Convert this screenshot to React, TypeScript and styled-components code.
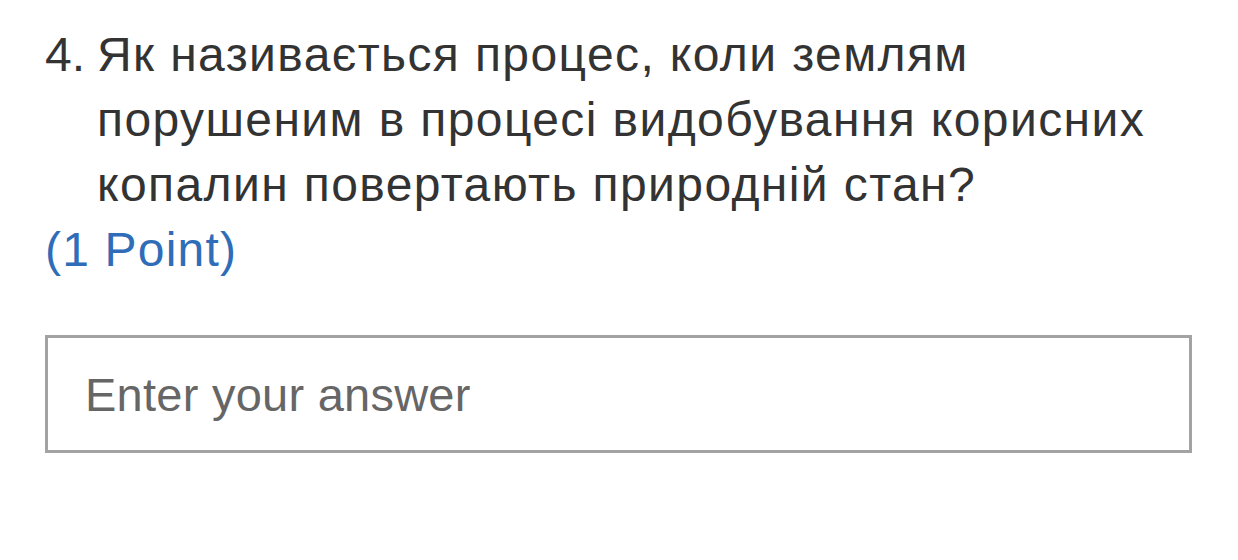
import styled, { createGlobalStyle } from 'styled-components';

const GlobalStyle = createGlobalStyle`
  body {
    margin: 0;
    background: #ffffff;
    font-family: 'Liberation Sans', Arial, sans-serif;
  }
`;

const Page = styled.main`
  padding: 22px 46px 0 45px;
  width: 1238px;
  box-sizing: border-box;
`;

const Question = styled.div`
  display: flex;
  color: #333333;
  font-size: 48px;
  line-height: 65px;
  letter-spacing: 1.4px;
`;

const Number = styled.span`
  flex: 0 0 52px;
  letter-spacing: 0;
`;

const Title = styled.span`
  flex: 0 1 1080px;
`;

const Points = styled.div`
  color: #2f6db8;
  font-size: 48px;
  line-height: 65px;
  letter-spacing: 1.2px;
`;

const AnswerInput = styled.input`
  display: block;
  margin-top: 53px;
  width: 1147px;
  height: 118px;
  box-sizing: border-box;
  border: 3px solid #a3a3a3;
  padding: 0 37px;
  font-family: inherit;
  font-size: 47px;
  letter-spacing: 0.25px;
  color: #333333;
  background: #ffffff;
  outline: none;

  &::placeholder {
    color: #666666;
  }
`;

export default function App() {
  return (
    <>
      <GlobalStyle />
      <Page>
        <Question>
          <Number>4.</Number>
          <Title>
            Як називається процес, коли землям порушеним в процесі видобування корисних копалин
            повертають природній стан?
          </Title>
        </Question>
        <Points>(1 Point)</Points>
        <AnswerInput placeholder="Enter your answer" />
      </Page>
    </>
  );
}
